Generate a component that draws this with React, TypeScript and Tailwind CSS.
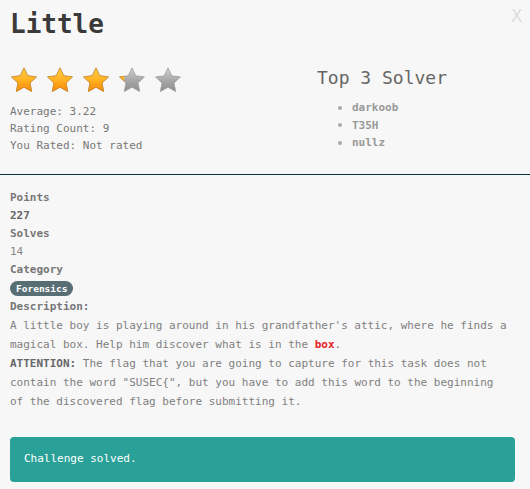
import React from 'react';

const STAR_PATH = 'M14 1 L18 9.5 L27.3 10.7 L20.5 17.1 L22.2 26.3 L14 21.8 L5.8 26.3 L7.5 17.1 L0.7 10.7 L10 9.5 Z';

const Star: React.FC<{ fill: number; id: string }> = ({ fill, id }) => (
  <svg width="28" height="28" viewBox="-1 -1 30 30">
    <defs>
      <linearGradient id={`gold-${id}`} x1="0" y1="0" x2="0" y2="1">
        <stop offset="0%" stopColor="#ffd54a" />
        <stop offset="55%" stopColor="#ffae1f" />
        <stop offset="100%" stopColor="#f28a0c" />
      </linearGradient>
      <linearGradient id={`grey-${id}`} x1="0" y1="0" x2="0" y2="1">
        <stop offset="0%" stopColor="#d0d0d0" />
        <stop offset="55%" stopColor="#a6a6a6" />
        <stop offset="100%" stopColor="#8e8e8e" />
      </linearGradient>
      <clipPath id={`clip-${id}`}>
        <rect x="-1" y="-1" width={30 * fill} height="30" />
      </clipPath>
    </defs>
    <path d={STAR_PATH} fill={`url(#grey-${id})`} stroke="#9a9a9a" strokeWidth="0.8" strokeLinejoin="round" />
    {fill > 0 && (
      <path
        d={STAR_PATH}
        fill={`url(#gold-${id})`}
        stroke="#d98a1a"
        strokeWidth="0.8"
        strokeLinejoin="round"
        clipPath={`url(#clip-${id})`}
      />
    )}
  </svg>
);

const solvers = ['darkoob', 'T35H', 'nullz'];
const rating = 3.22;

export default function App() {
  return (
    <div className="relative w-[530px] h-[489px] overflow-hidden bg-[#f7f7f7] font-['DejaVu_Sans_Mono',monospace] text-[11px] text-[#777]">
      {/* close button */}
      <button className="absolute top-[7px] right-[8px] text-[18px] leading-[18px] text-[#ddd]">X</button>

      {/* header */}
      <div className="h-[175px] border-b border-[#073642]">
        <h1 className="pl-[10px] pt-[9px] text-[26px] leading-[30px] font-bold text-[#3a3a3a]">Little</h1>
        <div className="flex mt-[27px]">
          <div className="w-[317px] pl-[10px]">
            <div className="flex gap-[8px]">
              {[0, 1, 2, 3, 4].map((i) => (
                <Star key={i} id={`s${i}`} fill={Math.max(0, Math.min(1, rating - i))} />
              ))}
            </div>
            <div className="mt-[9px] leading-[17px]">
              <div>Average: 3.22</div>
              <div>Rating Count: 9</div>
              <div>You Rated: Not rated</div>
            </div>
          </div>
          <div>
            <h2 className="text-[18px] leading-[24px] text-[#666]">Top 3 Solver</h2>
            <ul className="mt-[9px] leading-[17.5px]">
              {solvers.map((s) => (
                <li key={s} className="flex items-center pl-[21px]">
                  <span className="w-[4px] h-[4px] rounded-full bg-[#aaa] mr-[10px]" />
                  <span className="font-bold text-[#999]">{s}</span>
                </li>
              ))}
            </ul>
          </div>
        </div>
      </div>

      {/* details */}
      <div className="pl-[10px] pr-[20px] pt-[14px]">
        <div className="leading-[18px]">
          <div className="font-bold text-[#777]">Points</div>
          <div className="font-bold text-[#666]">227</div>
          <div className="font-bold text-[#777]">Solves</div>
          <div className="text-[#888]">14</div>
          <div className="font-bold text-[#777]">Category</div>
        </div>
        <div className="h-[19px] flex items-center">
          <span className="h-[15px] px-[6px] rounded-full bg-[#586e75] text-white font-bold text-[9.5px] leading-[15px]">
            Forensics
          </span>
        </div>
        <div className="font-bold text-[#777] leading-[18px]">Description:</div>
        <div className="leading-[19px] text-[#808080]">
          <p>
            A little boy is playing around in his grandfather's attic, where he finds a magical box. Help him
            discover what is in the <span className="font-bold text-[#e8232b]">box</span>.
          </p>
          <p>
            <span className="font-bold text-[#666]">ATTENTION:</span> The flag that you are going to capture for
            this task does not contain the word "SUSEC{'{'}", but you have to add this word to the beginning of the
            discovered flag before submitting it.
          </p>
        </div>
      </div>

      {/* status */}
      <div className="ml-[10px] mr-[15px] mt-[26px] h-[45px] flex items-center px-[14px] rounded-[4px] bg-[#2aa198] text-white">
        Challenge solved.
      </div>
    </div>
  );
}
